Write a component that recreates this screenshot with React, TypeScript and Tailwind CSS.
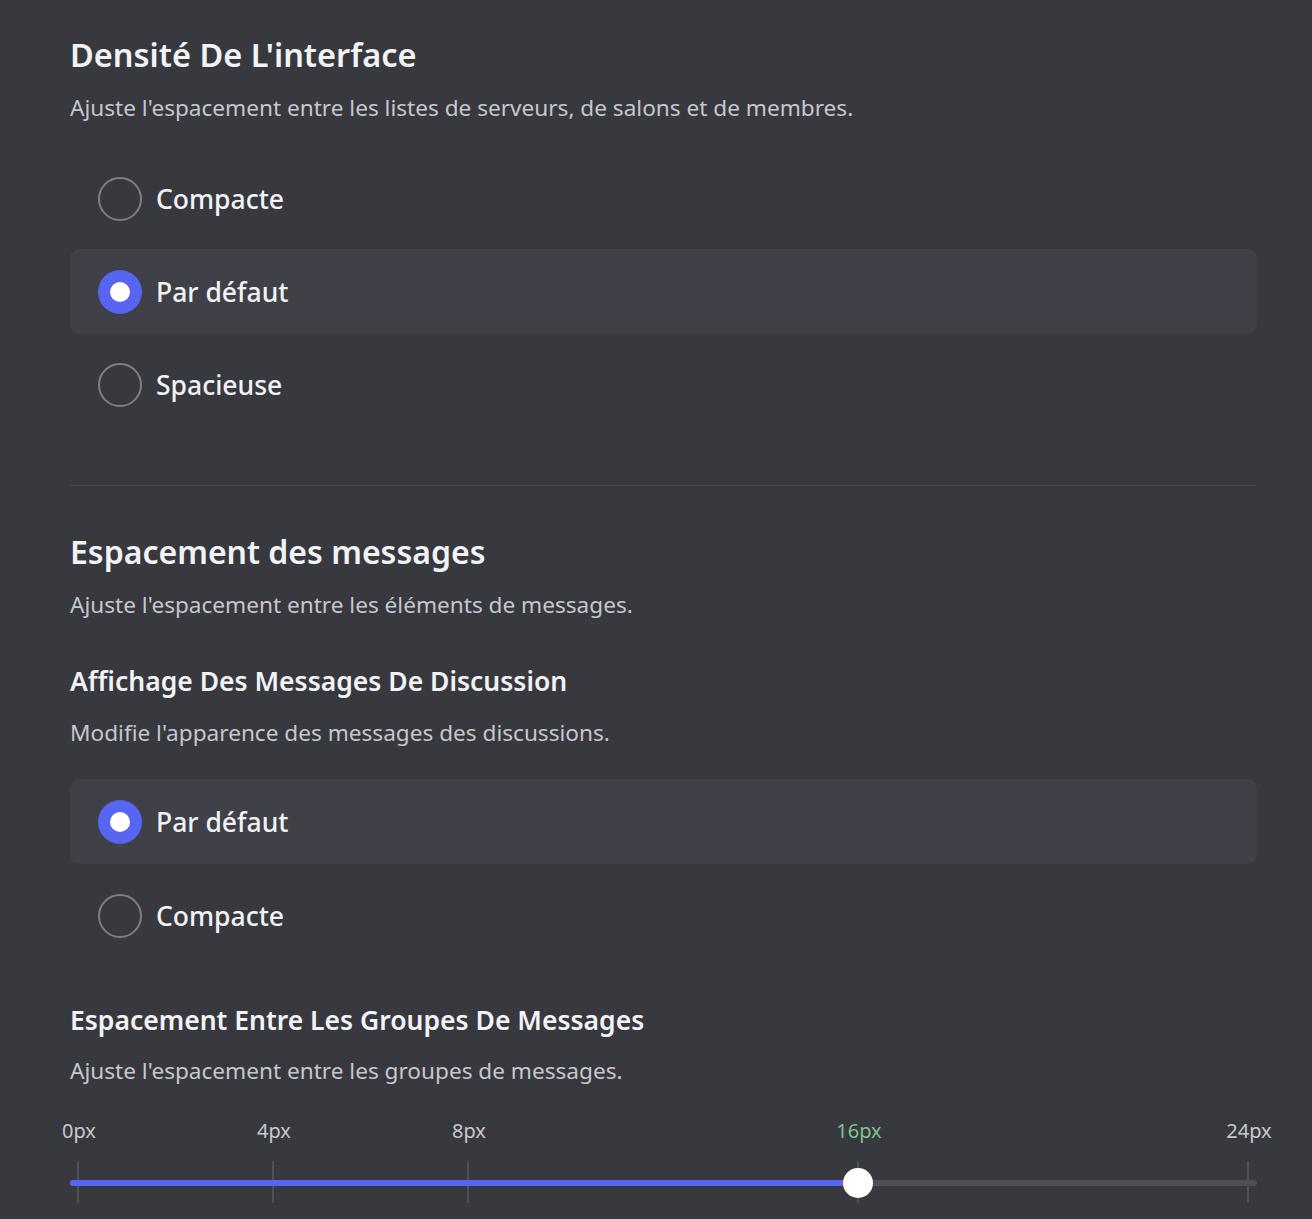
import React from "react";

const font = { fontFamily: '"Noto Sans", "Open Sans", sans-serif' };

function Radio({ label, selected }: { label: string; selected?: boolean }) {
  return (
    <div
      className={`flex h-[85px] items-center gap-[14px] rounded-[10px] pl-[28px] ${
        selected ? "bg-[#404148]" : ""
      }`}
    >
      {selected ? (
        <div className="flex h-[44px] w-[44px] items-center justify-center rounded-full bg-[#5865f2]">
          <div className="h-[20px] w-[20px] rounded-full bg-white" />
        </div>
      ) : (
        <div className="h-[44px] w-[44px] rounded-full border-[2px] border-[#7e7f85]" />
      )}
      <span className="text-[26.5px] font-medium leading-[34px] text-[#f2f3f5]">{label}</span>
    </div>
  );
}

const ticks = [
  { v: 0, label: "0px" },
  { v: 4, label: "4px" },
  { v: 8, label: "8px" },
  { v: 16, label: "16px", active: true },
  { v: 24, label: "24px" },
];

function Slider() {
  const left = 8;
  const span = 1170;
  const pos = (v: number) => left + (span * v) / 24;
  return (
    <div className="relative mt-[34px] h-[100px] w-[1187px]">
      {ticks.map((t) => (
        <div
          key={t.v}
          className="absolute top-0 flex w-[80px] -translate-x-1/2 justify-center"
          style={{ left: pos(t.v) + 1 }}
        >
          <span
            className={`text-[20px] leading-[24px] ${
              t.active ? "text-[#7bc48a]" : "text-[#c7c8cd]"
            }`}
          >
            {t.label}
          </span>
        </div>
      ))}
      {ticks.map((t) => (
        <div
          key={"t" + t.v}
          className="absolute top-[42px] h-[42px] w-[2px] bg-[#4f5057]"
          style={{ left: pos(t.v) - 1 }}
        />
      ))}
      <div className="absolute left-0 top-[61px] h-[6px] w-[1187px] rounded-full bg-[#4e4f57]" />
      <div
        className="absolute left-0 top-[61px] h-[6px] rounded-full bg-[#5865f2]"
        style={{ width: pos(16) }}
      />
      <div
        className="absolute top-[49px] h-[30px] w-[30px] -translate-x-1/2 rounded-full bg-white"
        style={{ left: pos(16) }}
      />
    </div>
  );
}

export default function App() {
  return (
    <div className="min-h-[1219px] w-[1312px] bg-[#38393f] px-[70px] pt-[35px]" style={font}>
      <div className="flex w-[1187px] flex-col">
        <h1 className="text-[32.5px] font-semibold leading-[40px] text-[#f2f3f5]">
          Densité De L'interface
        </h1>
        <p className="mt-[19px] text-[22.6px] leading-[28px] text-[#c6c7cc]">
          Ajuste l'espacement entre les listes de serveurs, de salons et de membres.
        </p>
        <div className="mt-[34px] flex flex-col gap-[8px]">
          <Radio label="Compacte" />
          <Radio label="Par défaut" selected />
          <Radio label="Spacieuse" />
        </div>
        <div className="mt-[58px] h-px w-full bg-[#45464c]" />
        <h2 className="mt-[46px] text-[32px] font-semibold leading-[40px] text-[#f2f3f5]">
          Espacement des messages
        </h2>
        <p className="mt-[19px] text-[22.6px] leading-[28px] text-[#c6c7cc]">
          Ajuste l'espacement entre les éléments de messages.
        </p>
        <h3 className="mt-[45px] text-[26.5px] font-semibold leading-[34px] text-[#f2f3f5]">
          Affichage Des Messages De Discussion
        </h3>
        <p className="mt-[21px] text-[22.6px] leading-[28px] text-[#c6c7cc]">
          Modifie l'apparence des messages des discussions.
        </p>
        <div className="mt-[32px] flex flex-col gap-[9px]">
          <Radio label="Par défaut" selected />
          <Radio label="Compacte" />
        </div>
        <h3 className="mt-[45px] text-[26.5px] font-semibold leading-[34px] text-[#f2f3f5]">
          Espacement Entre Les Groupes De Messages
        </h3>
        <p className="mt-[20px] text-[22.6px] leading-[28px] text-[#c6c7cc]">
          Ajuste l'espacement entre les groupes de messages.
        </p>
        <Slider />
      </div>
    </div>
  );
}
